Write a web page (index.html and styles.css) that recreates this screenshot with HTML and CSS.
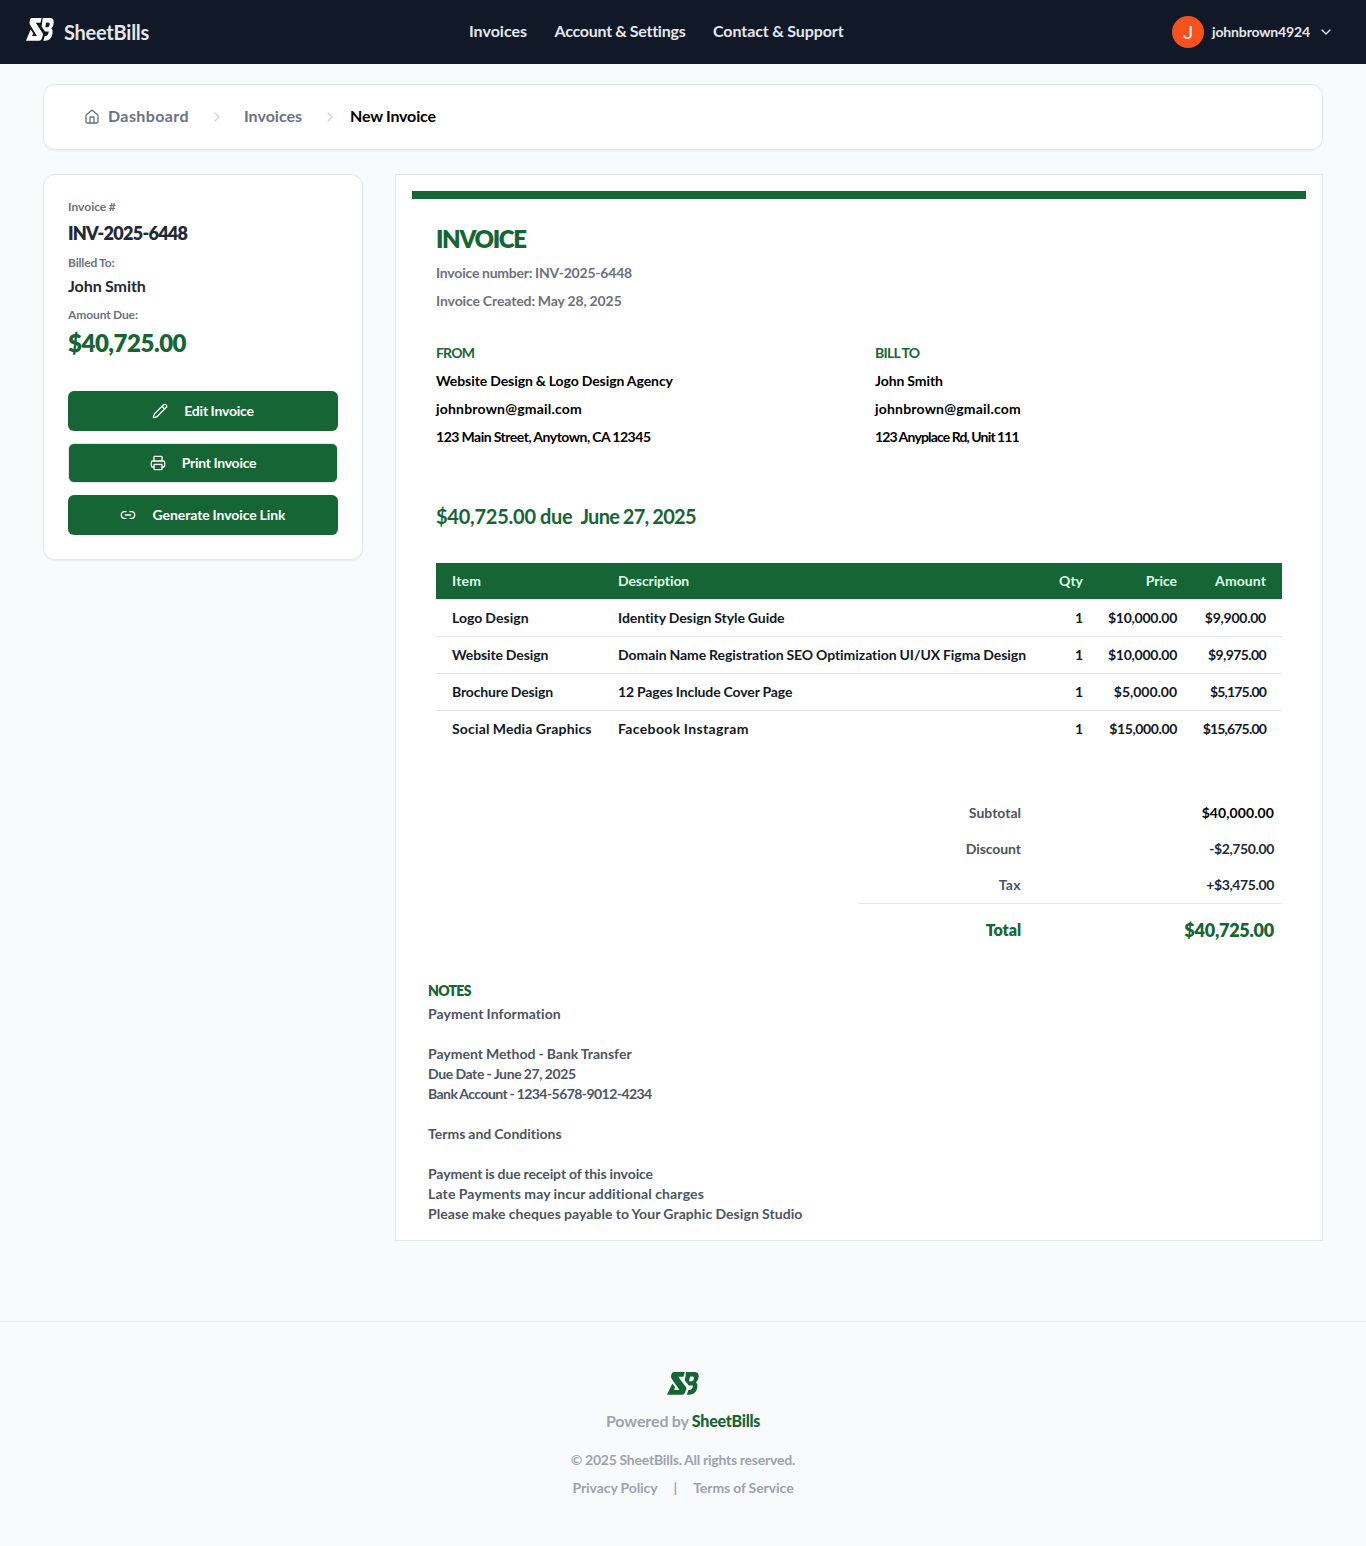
FILE: index.html
```html
<!DOCTYPE html>
<html lang="en">
<head>
<meta charset="utf-8">
<title>New Invoice - SheetBills</title>
<link rel="stylesheet" href="styles.css">
</head>
<body>
<svg class="defs" aria-hidden="true">
  <symbol id="logo" viewBox="0 0 97 68" preserveAspectRatio="none">
    <path d="M20 0H54L50 14H34L58 46Q60 50 57 55L54 62Q52 67 46 67H0L16 34L25 46L21 53H38L14 20Q11 15 13 8Q14 0 20 0Z"/>
    <path fill-rule="evenodd" d="M58 0H85Q97 1 96 14Q95 26 88 31Q94 35 92 45Q90 58 82 63Q76 67 68 67H60L65 53H70Q76 52 78 44L79 40H66L54 25ZM70 13L67 27H76Q81 26 82 19Q82 13 78 13Z"/>
  </symbol>
  <symbol id="chevron" viewBox="0 0 24 24"><path d="m9 18 6-6-6-6"/></symbol>
</svg>

<header class="topbar">
  <a class="brand"><svg class="brand-logo"><use href="#logo"/></svg><span class="k25">SheetBills</span></a>
  <nav class="nav"><a>Invoices</a><a class="k25">Account &amp; Settings</a><a class="k05">Contact &amp; Support</a></nav>
  <div class="user">
    <span class="avatar">J</span><span class="k15">johnbrown4924</span>
    <svg class="icon caret" viewBox="0 0 24 24"><path d="m6 9 6 6 6-6"/></svg>
  </div>
</header>

<main class="page">
  <nav class="crumbs">
    <svg class="icon" viewBox="0 0 24 24"><path d="M15 21v-8a1 1 0 0 0-1-1h-4a1 1 0 0 0-1 1v8"/><path d="M3 10a2 2 0 0 1 .709-1.528l7-5.999a2 2 0 0 1 2.582 0l7 5.999A2 2 0 0 1 21 10v9a2 2 0 0 1-2 2H5a2 2 0 0 1-2-2z"/></svg>
    <a class="crumb crumb-home">Dashboard</a>
    <svg class="icon sep"><use href="#chevron"/></svg>
    <a class="crumb crumb-mid">Invoices</a>
    <svg class="icon sep"><use href="#chevron"/></svg>
    <span class="crumb current k15">New Invoice</span>
  </nav>

  <div class="columns">
    <aside class="summary">
      <div class="label">Invoice #</div>
      <div class="number k7">INV-2025-6448</div>
      <div class="label k15">Billed To:</div>
      <div class="client k05">John Smith</div>
      <div class="label k1">Amount Due:</div>
      <div class="due-amount k5">$40,725.00</div>
      <div class="actions">
        <button class="btn"><svg class="icon" viewBox="0 0 24 24"><path d="M21.174 6.812a1 1 0 0 0-3.986-3.987L3.842 16.174a2 2 0 0 0-.5.83l-1.321 4.352a.5.5 0 0 0 .623.622l4.353-1.32a2 2 0 0 0 .83-.497z"/><path d="m15 5 4 4"/></svg><span class="k2">Edit Invoice</span></button>
        <button class="btn btn-outline"><svg class="icon" viewBox="0 0 24 24"><path d="M6 18H4a2 2 0 0 1-2-2v-5a2 2 0 0 1 2-2h16a2 2 0 0 1 2 2v5a2 2 0 0 1-2 2h-2"/><path d="M6 9V3a1 1 0 0 1 1-1h10a1 1 0 0 1 1 1v6"/><rect x="6" y="14" width="12" height="8" rx="1"/></svg><span class="k25">Print Invoice</span></button>
        <button class="btn"><svg class="icon" viewBox="0 0 24 24"><path d="M9 17H7A5 5 0 0 1 7 7h2"/><path d="M15 7h2a5 5 0 1 1 0 10h-2"/><path d="M8 12h8"/></svg><span class="k05">Generate Invoice Link</span></button>
      </div>
    </aside>

    <article class="invoice">
      <div class="accent"></div>
      <div class="sheet">
        <h1 class="k13">INVOICE</h1>
        <p class="meta k2">Invoice number: INV-2025-6448</p>
        <p class="meta k1">Invoice Created: May 28, 2025</p>
        <div class="parties">
          <div>
            <h2 class="k8">FROM</h2>
            <p class="k05">Website Design &amp; Logo Design Agency</p>
            <p class="w2">johnbrown@gmail.com</p>
            <p class="k5">123 Main Street, Anytown, CA 12345</p>
          </div>
          <div>
            <h2 class="k7">BILL TO</h2>
            <p class="k05">John Smith</p>
            <p class="w2">johnbrown@gmail.com</p>
            <p class="k8">123 Anyplace Rd, Unit 111</p>
          </div>
        </div>
        <div class="due"><span class="k25">$40,725.00 due</span><span class="k7">June 27, 2025</span></div>
        <table class="items">
          <colgroup><col class="c-item"><col class="c-desc"><col class="c-qty"><col class="c-price"><col class="c-amount"></colgroup>
          <thead><tr><th class="w2">Item</th><th class="k1">Description</th><th>Qty</th><th class="k05">Price</th><th class="w1">Amount</th></tr></thead>
          <tbody>
            <tr><td class="w03">Logo Design</td><td class="k05">Identity Design Style Guide</td><td>1</td><td class="k25">$10,000.00</td><td class="k25">$9,900.00</td></tr>
            <tr><td class="k1">Website Design</td><td class="k05">Domain Name Registration SEO Optimization UI/UX Figma Design</td><td>1</td><td class="k25">$10,000.00</td><td class="k6">$9,975.00</td></tr>
            <tr><td class="k15">Brochure Design</td><td class="k1">12 Pages Include Cover Page</td><td>1</td><td class="k03">$5,000.00</td><td class="k8">$5,175.00</td></tr>
            <tr><td class="w15">Social Media Graphics</td><td class="w3">Facebook Instagram</td><td>1</td><td class="k4">$15,000.00</td><td class="k8">$15,675.00</td></tr>
          </tbody>
        </table>
        <dl class="totals">
          <div class="line"><dt>Subtotal</dt><dd class="black w08">$40,000.00</dd></div>
          <div class="line"><dt class="k05">Discount</dt><dd class="k4">-$2,750.00</dd></div>
          <div class="line"><dt class="w3">Tax</dt><dd class="k4">+$3,475.00</dd></div>
          <div class="line grand"><dt class="k05">Total</dt><dd class="k25">$40,725.00</dd></div>
        </dl>
      </div>
      <section class="notes">
        <h2 class="k7">NOTES</h2>
        <p class="w08">Payment Information</p>
        <p class="gap">Payment Method - Bank Transfer</p>
        <p class="k4">Due Date - June 27, 2025</p>
        <p class="k55">Bank Account - 1234-5678-9012-4234</p>
        <p class="gap">Terms and Conditions</p>
        <p class="gap k1">Payment is due receipt of this invoice</p>
        <p class="w15">Late Payments may incur additional charges</p>
        <p class="w08">Please make cheques payable to Your Graphic Design Studio</p>
      </section>
    </article>
  </div>
</main>

<footer class="footer">
  <svg class="footer-logo"><use href="#logo"/></svg>
  <div class="powered k1">Powered by <b class="k25">SheetBills</b></div>
  <div class="copy k2">© 2025 SheetBills. All rights reserved.</div>
  <div class="legal k05"><a>Privacy Policy</a><span>|</span><a>Terms of Service</a></div>
</footer>
</body>
</html>
```
FILE: styles.css
```css
* { box-sizing: border-box; }
body {
  margin: 0;
  background: #f9fafc;
  font-family: Lato, "Open Sans", sans-serif;
  font-size: 14px;
  font-weight: 700;
  line-height: 20px;
  color: #000;
  font-variant-ligatures: none;
  word-spacing: -0.4px;
}
h1, h2, p, dl, dd { margin: 0; }
.defs { position: absolute; width: 0; height: 0; }
.icon {
  width: 16px;
  height: 16px;
  flex: none;
  fill: none;
  stroke: currentColor;
  stroke-width: 2;
  stroke-linecap: round;
  stroke-linejoin: round;
}

/* tracking: k = tighter, w = wider */
.k03 { letter-spacing: -0.03px; }
.k05 { letter-spacing: -0.06px; }
.k1 { letter-spacing: -0.1px; }
.k15 { letter-spacing: -0.15px; }
.k2 { letter-spacing: -0.21px; }
.k25 { letter-spacing: -0.25px; }
.k4 { letter-spacing: -0.38px; }
.k5 { letter-spacing: -0.48px; }
.k55 { letter-spacing: -0.56px; }
.k6 { letter-spacing: -0.6px; }
.k7 { letter-spacing: -0.73px; }
.k8 { letter-spacing: -0.82px; }
.k13 { letter-spacing: -1.35px; }
.w03 { letter-spacing: 0.03px; }
.w08 { letter-spacing: 0.08px; }
.w1 { letter-spacing: 0.09px; }
.w15 { letter-spacing: 0.16px; }
.w2 { letter-spacing: 0.2px; }
.w3 { letter-spacing: 0.35px; }

.topbar {
  display: grid;
  grid-template-columns: 443px 1fr auto;
  align-items: center;
  height: 64px;
  padding: 0 32px 0 26px;
  background: #111827;
  color: #e5e7eb;
}
.brand { display: flex; align-items: center; gap: 10px; font-size: 20px; }
.brand-logo { width: 28px; height: 23px; margin-top: -5px; fill: #fff; }
.nav { display: flex; gap: 27.5px; font-size: 16px; padding-bottom: 2px; }
.user { display: flex; align-items: center; gap: 8px; }
.avatar {
  width: 32px;
  height: 32px;
  border-radius: 50%;
  background: #f8511d;
  color: #fff;
  font: 400 18px/33px Roboto, sans-serif;
  text-align: center;
}

.page { width: 1280px; margin: 20px auto 0; }
.crumbs {
  display: flex;
  align-items: center;
  height: 66px;
  padding-left: 40px;
  background: #fff;
  border: 1px solid #e5e7eb;
  border-radius: 12px;
  box-shadow: 0 1px 2px rgba(0, 0, 0, .05);
  color: #6b7280;
  font-size: 16px;
}
.crumb { padding-bottom: 2px; }
.crumb-home { width: 109px; padding-left: 8px; letter-spacing: .4px; }
.crumb-mid { width: 97px; padding-left: 19px; }
.sep { color: #d1d5db; }
.current { color: #000; padding-left: 12px; }

.columns { display: grid; grid-template-columns: 320px 928px; gap: 32px; align-items: start; margin-top: 24px; }
.summary {
  height: 386px;
  padding: 24px;
  background: #fff;
  border: 1px solid #e5e7eb;
  border-radius: 12px;
  box-shadow: 0 1px 2px rgba(0, 0, 0, .05);
}
.label { font-size: 12px; line-height: 16px; color: #6b7280; margin-bottom: 4px; }
.number { font-size: 18px; line-height: 28px; font-weight: 800; color: #1f2937; margin-bottom: 8px; }
.client { font-size: 16px; line-height: 22px; color: #1f2937; margin-bottom: 10px; }
.due-amount { font-size: 24px; line-height: 32px; font-weight: 800; color: #166534; }
.actions { display: grid; gap: 12px; margin-top: 32px; }
.btn {
  display: flex;
  align-items: center;
  justify-content: center;
  gap: 16px;
  height: 40px;
  padding: 0;
  border: 0;
  border-radius: 6px;
  background: #166534;
  color: #fff;
  font: 700 14px/20px Lato, "Open Sans", sans-serif;
  word-spacing: -0.5px;
}
.btn-outline { border: 1px solid #e5e7eb; }

.invoice {
  height: 1067px;
  padding: 16px;
  background: #fff;
  border: 1px solid #e5e7eb;
}
.accent { height: 8px; background: #166534; }
.sheet { padding: 24px 24px 0; }
.sheet h1 { font-size: 24px; line-height: 32px; font-weight: 800; color: #166534; }
.meta { margin-top: 8px; color: #6b7280; }
.parties { display: grid; grid-template-columns: 439px 1fr; margin-top: 32px; }
.parties > div { display: grid; gap: 8px; }
.parties h2, .notes h2 { font-size: 14px; line-height: 20px; color: #166534; }
.due { display: flex; gap: 8px; margin: 55px 0 33px; font-size: 20px; line-height: 28px; color: #166534; }

.items { width: 846px; table-layout: fixed; border-collapse: separate; border-spacing: 0; color: #111827; }
.c-item { width: 182px; }
.c-desc { width: 415px; }
.c-qty { width: 50px; }
.c-price { width: 94px; }
.c-amount { width: 105px; }
.items th, .items td { height: 37px; padding: 0; border-bottom: 1px solid #e5e7eb; text-align: right; white-space: nowrap; }
.items th { background: #166534; background-clip: padding-box; color: #dcfce7; }
.items :is(th, td):nth-child(-n+2) { text-align: left; }
.items :is(th, td):first-child { padding-left: 16px; }
.items :is(th, td):last-child { padding-right: 16px; }
.items tbody tr:last-child td { height: 36px; border-bottom: 0; }

.totals { width: 423px; margin: 48px 0 0 auto; }
.line { display: grid; grid-template-columns: 162px 1fr; align-items: center; height: 36px; padding-right: 8px; text-align: right; }
.line dt { color: #4b5563; }
.line dd { color: #1f2937; }
.line dd.black { color: #000; }
.line.grand { height: 53px; border-top: 1px solid #e5e7eb; font-size: 16px; font-weight: 800; }
.line.grand dt, .line.grand dd { color: #166534; }
.line.grand dd { font-size: 18px; }

.notes { padding: 25px 16px 0; color: #4b5563; }
.notes h2 { margin-bottom: 3px; font-weight: 800; }
.notes .gap { margin-top: 20px; }

.footer {
  display: flex;
  flex-direction: column;
  align-items: center;
  height: 225px;
  margin-top: 80px;
  padding-top: 50px;
  border-top: 1px solid #e3f5ea;
  color: #9ca3af;
}
.footer-logo { width: 32px; height: 23px; fill: #166534; }
.powered { margin-top: 14px; font-size: 16px; line-height: 24px; }
.powered b { color: #166534; }
.copy { margin-top: 17px; }
.legal { display: flex; gap: 16px; margin-top: 8px; }
```
